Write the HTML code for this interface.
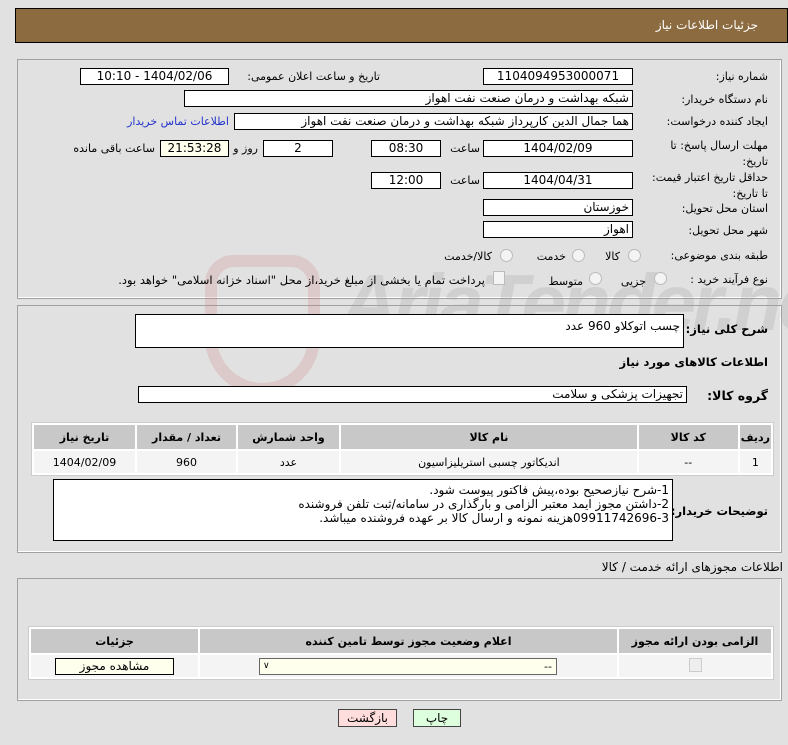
<!DOCTYPE html>
<html><head><meta charset="utf-8"><style>
body{margin:0;width:788px;height:745px;background:#e1e1e1;font-family:Tahoma,"DejaVu Sans","Liberation Sans",sans-serif;font-size:11px;color:#000;position:relative;overflow:hidden}
.a{position:absolute}
.in{position:absolute;background:#fff;border:1px solid #000;box-sizing:border-box;height:17px;line-height:15px;padding:0 3px;white-space:nowrap;direction:rtl;overflow:hidden;font-size:12px}
.c{text-align:center}
.l{position:absolute;direction:rtl;white-space:nowrap}
.b{font-weight:bold;font-size:11.5px}
.pan{position:absolute;border:1px solid #a0a0a0;box-shadow:inset -1px -1px #fff}
table{border-collapse:separate;border-spacing:2px;position:absolute;background:#fff;border:1px solid #ccc}
th{background:#c8c8c8;font-weight:bold;height:22px}
td{background:#f4f4f4;height:20px;text-align:center}
.rad{position:absolute;width:11px;height:11px;border:1px solid #bbb;border-radius:50%;background:#f4f4f4}
</style></head><body>
<div class="a" style="left:15px;top:8px;width:773px;height:35px;background:#8c6b40;border:1px solid #000;box-sizing:border-box"></div>
<div class="l" style="right:30px;top:18px;color:#fff;font-size:12px">جزئیات اطلاعات نیاز</div>

<div class="pan" style="left:17px;top:59px;width:763px;height:238px"></div>
<div class="pan" style="left:17px;top:305px;width:763px;height:246px"></div>
<div class="pan" style="left:17px;top:578px;width:763px;height:121px"></div>

<div class="a" style="left:205px;top:255px;width:115px;height:140px;border:12px solid rgba(205,120,120,.22);border-radius:30px 30px 60px 60px;box-sizing:border-box"></div>
<div class="a" style="left:340px;top:258px;font-size:80px;font-weight:bold;font-style:italic;color:rgba(160,160,160,.25);font-family:'Liberation Sans',sans-serif;letter-spacing:-4px;line-height:90px;white-space:nowrap">AriaTender.net</div>

<div class="l" style="right:20px;top:70px">شماره نیاز:</div>
<div class="in c" style="left:483px;top:68px;width:150px">1104094953000071</div>
<div class="l" style="right:408px;top:70px">تاریخ و ساعت اعلان عمومی:</div>
<div class="in c" style="left:80px;top:68px;width:149px">1404/02/06 - 10:10</div>

<div class="l" style="right:20px;top:93px">نام دستگاه خریدار:</div>
<div class="in" style="left:184px;top:90px;width:449px">شبکه بهداشت و درمان صنعت نفت اهواز</div>

<div class="l" style="right:20px;top:115px">ایجاد کننده درخواست:</div>
<div class="in" style="left:234px;top:113px;width:399px">هما جمال الدین کارپرداز شبکه بهداشت و درمان صنعت نفت اهواز</div>
<div class="l" style="right:559px;top:115px;color:#2233cc">اطلاعات تماس خریدار</div>

<div class="l" style="right:20px;top:138px;line-height:16px">مهلت ارسال پاسخ: تا<br>تاریخ:</div>
<div class="in c" style="left:483px;top:140px;width:150px">1404/02/09</div>
<div class="l" style="right:308px;top:142px">ساعت</div>
<div class="in c" style="left:371px;top:140px;width:70px">08:30</div>
<div class="in c" style="left:263px;top:140px;width:70px">2</div>
<div class="l" style="right:530px;top:142px">روز و</div>
<div class="in c" style="left:160px;top:140px;width:69px;background:#ffffee">21:53:28</div>
<div class="l" style="right:633px;top:142px">ساعت باقی مانده</div>

<div class="l" style="right:20px;top:170px;line-height:16px">حداقل تاریخ اعتبار قیمت:<br>تا تاریخ:</div>
<div class="in c" style="left:483px;top:172px;width:150px">1404/04/31</div>
<div class="l" style="right:308px;top:174px">ساعت</div>
<div class="in c" style="left:371px;top:172px;width:70px">12:00</div>

<div class="l" style="right:20px;top:202px">استان محل تحویل:</div>
<div class="in" style="left:483px;top:199px;width:150px">خوزستان</div>
<div class="l" style="right:20px;top:224px">شهر محل تحویل:</div>
<div class="in" style="left:483px;top:221px;width:150px">اهواز</div>

<div class="l" style="right:20px;top:249px">طبقه بندی موضوعی:</div>
<div class="rad" style="left:628px;top:249px"></div><div class="l" style="right:168px;top:250px">کالا</div>
<div class="rad" style="left:572px;top:249px"></div><div class="l" style="right:222px;top:250px">خدمت</div>
<div class="rad" style="left:500px;top:249px"></div><div class="l" style="right:296px;top:250px">کالا/خدمت</div>

<div class="l" style="right:20px;top:273px">نوع فرآیند خرید :</div>
<div class="rad" style="left:654px;top:272px"></div><div class="l" style="right:142px;top:275px">جزیی</div>
<div class="rad" style="left:589px;top:272px"></div><div class="l" style="right:205px;top:275px">متوسط</div>
<div class="a" style="left:493px;top:271px;width:10px;height:12px;border:1px solid #bbb;background:#f4f4f4"></div>
<div class="l" style="right:303px;top:273px;font-size:11.5px">پرداخت تمام یا بخشی از مبلغ خرید،از محل "اسناد خزانه اسلامی" خواهد بود.</div>

<div class="l b" style="right:20px;top:322px">شرح کلی نیاز:</div>
<div class="in" style="left:135px;top:314px;width:549px;height:34px;line-height:22px">چسب اتوکلاو 960 عدد</div>
<div class="l b" style="right:20px;top:355px">اطلاعات کالاهای مورد نیاز</div>
<div class="l b" style="right:20px;top:388px;font-size:12.5px">گروه کالا:</div>
<div class="in" style="left:138px;top:386px;width:549px">تجهیزات پزشکی و سلامت</div>

<table style="left:31px;top:422px;width:743px;direction:rtl">
<tr><th style="width:28px">ردیف</th><th style="width:97px">کد کالا</th><th>نام کالا</th><th style="width:99px">واحد شمارش</th><th style="width:97px">تعداد / مقدار</th><th style="width:99px">تاریخ نیاز</th></tr>
<tr><td>1</td><td>--</td><td>اندیکاتور چسبی استریلیزاسیون</td><td>عدد</td><td>960</td><td>1404/02/09</td></tr>
</table>

<div class="l b" style="right:20px;top:504px">توضیحات خریدار:</div>
<div class="in" style="left:53px;top:479px;width:620px;height:62px;line-height:14px;padding-top:3px;white-space:normal">1-شرح نیازصحیح بوده،پیش فاکتور  پیوست شود.<br>2-داشتن مجوز ایمد معتبر الزامی و بارگذاری در سامانه/ثبت تلفن فروشنده<br>09911742696-3هزینه نمونه و ارسال کالا بر عهده فروشنده میباشد.</div>

<div class="l" style="right:5px;top:560px;font-size:12px">اطلاعات مجوزهای ارائه خدمت / کالا</div>

<table style="left:28px;top:626px;width:746px;direction:rtl">
<tr><th style="width:150px">الزامی بودن ارائه مجوز</th><th>اعلام وضعیت مجوز توسط تامین کننده</th><th style="width:165px">جزئیات</th></tr>
<tr><td><span style="display:inline-block;width:11px;height:12px;border:1px solid #ccc;background:#eee"></span></td><td><div style="margin:0 auto 0 58px;width:298px;height:17px;border:1px solid #666;background:#ffffee;text-align:right;box-sizing:border-box;line-height:15px;padding:0 4px;position:relative">--<span style="position:absolute;left:3px;font-size:9px">&#8744;</span></div></td><td><div style="margin:0 auto;width:119px;height:17px;border:1px solid #000;background:#ffffee;box-sizing:border-box;line-height:15px;font-size:12px">مشاهده مجوز</div></td></tr>
</table>

<div class="a c" style="left:338px;top:709px;width:59px;height:18px;border:1px solid #444;background:#fdd;box-sizing:border-box;line-height:16px;font-size:12px">بازگشت</div>
<div class="a c" style="left:413px;top:709px;width:48px;height:18px;border:1px solid #444;background:#dfd;box-sizing:border-box;line-height:16px;font-size:12px">چاپ</div>
</body></html>
